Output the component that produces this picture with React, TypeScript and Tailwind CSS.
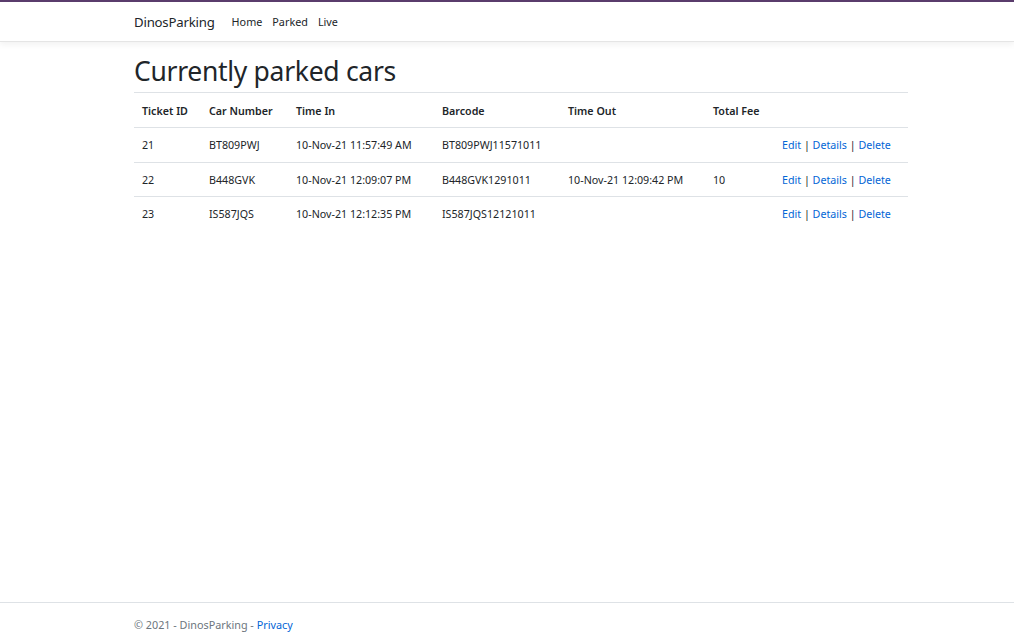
import React from 'react';

const rows = [
  { id: 21, car: 'BT809PWJ', timeIn: '10-Nov-21 11:57:49 AM', barcode: 'BT809PWJ11571011', timeOut: '', fee: '' },
  { id: 22, car: 'B448GVK', timeIn: '10-Nov-21 12:09:07 PM', barcode: 'B448GVK1291011', timeOut: '10-Nov-21 12:09:42 PM', fee: '10' },
  { id: 23, car: 'IS587JQS', timeIn: '10-Nov-21 12:12:35 PM', barcode: 'IS587JQS12121011', timeOut: '', fee: '' },
];

const font = { fontFamily: '"Noto Sans", "Open Sans", Arial, sans-serif' };

function App() {
  return (
    <div className="min-h-[642px] flex flex-col bg-white text-[#212529]" style={font}>
      <header className="border-t-2 border-[#5a3c6c] bg-white border-b border-b-[#e5e5e5] shadow-[0_3px_6px_rgba(0,0,0,0.05)]">
        <nav className="w-[774px] ml-[134px] h-[39px] flex items-center">
          <a className="text-[13.2px] tracking-[-0.2px] text-[#212529] mr-[17px] pt-[2px]">DinosParking</a>
          <div className="flex items-center gap-[10px] text-[10.8px] text-[#212529] pt-[2px]">
            <a>Home</a>
            <a>Parked</a>
            <a>Live</a>
          </div>
        </nav>
      </header>

      <main className="w-[774px] ml-[134px] flex-1">
        <h1 className="text-[26.5px] leading-[34px] mt-[12px] mb-[4px] tracking-[-0.3px]">Currently parked cars</h1>
        <table className="w-full text-[10.7px] border-collapse">
          <thead>
            <tr className="border-t border-[#dee2e6] border-b border-b-[#dee2e6]">
              <th className="w-[67px] text-left font-semibold px-[8px] h-[35px] pt-[2px]">Ticket ID</th>
              <th className="w-[87px] text-left font-semibold px-[8px] pt-[2px]">Car Number</th>
              <th className="w-[146px] text-left font-semibold px-[8px] pt-[2px]">Time In</th>
              <th className="w-[126px] text-left font-semibold px-[8px] pt-[2px]">Barcode</th>
              <th className="w-[145px] text-left font-semibold px-[8px] pt-[2px]">Time Out</th>
              <th className="w-[69px] text-left font-semibold px-[8px] pt-[2px]">Total Fee</th>
              <th className="px-[8px]"></th>
            </tr>
          </thead>
          <tbody>
            {rows.map((r) => (
              <tr key={r.id} className="border-b border-[#dee2e6] last:border-b-0">
                <td className="px-[8px] h-[34.5px] pt-[1px]">{r.id}</td>
                <td className="px-[8px] pt-[1px]">{r.car}</td>
                <td className="px-[8px] pt-[1px]">{r.timeIn}</td>
                <td className="px-[8px] pt-[1px]">{r.barcode}</td>
                <td className="px-[8px] pt-[1px]">{r.timeOut}</td>
                <td className="px-[8px] pt-[1px]">{r.fee}</td>
                <td className="px-[8px] pt-[1px] whitespace-nowrap">
                  <a className="text-[#0366d6]">Edit</a> | <a className="text-[#0366d6]">Details</a> |{' '}
                  <a className="text-[#0366d6]">Delete</a>
                </td>
              </tr>
            ))}
          </tbody>
        </table>
      </main>

      <footer className="border-t border-[#dee2e6] h-[40px]">
        <div className="w-[774px] ml-[134px] pt-[14px] text-[10.8px] text-[#6c757d]">
          © 2021 - DinosParking - <a className="text-[#0366d6]">Privacy</a>
        </div>
      </footer>
    </div>
  );
}

export default App;
